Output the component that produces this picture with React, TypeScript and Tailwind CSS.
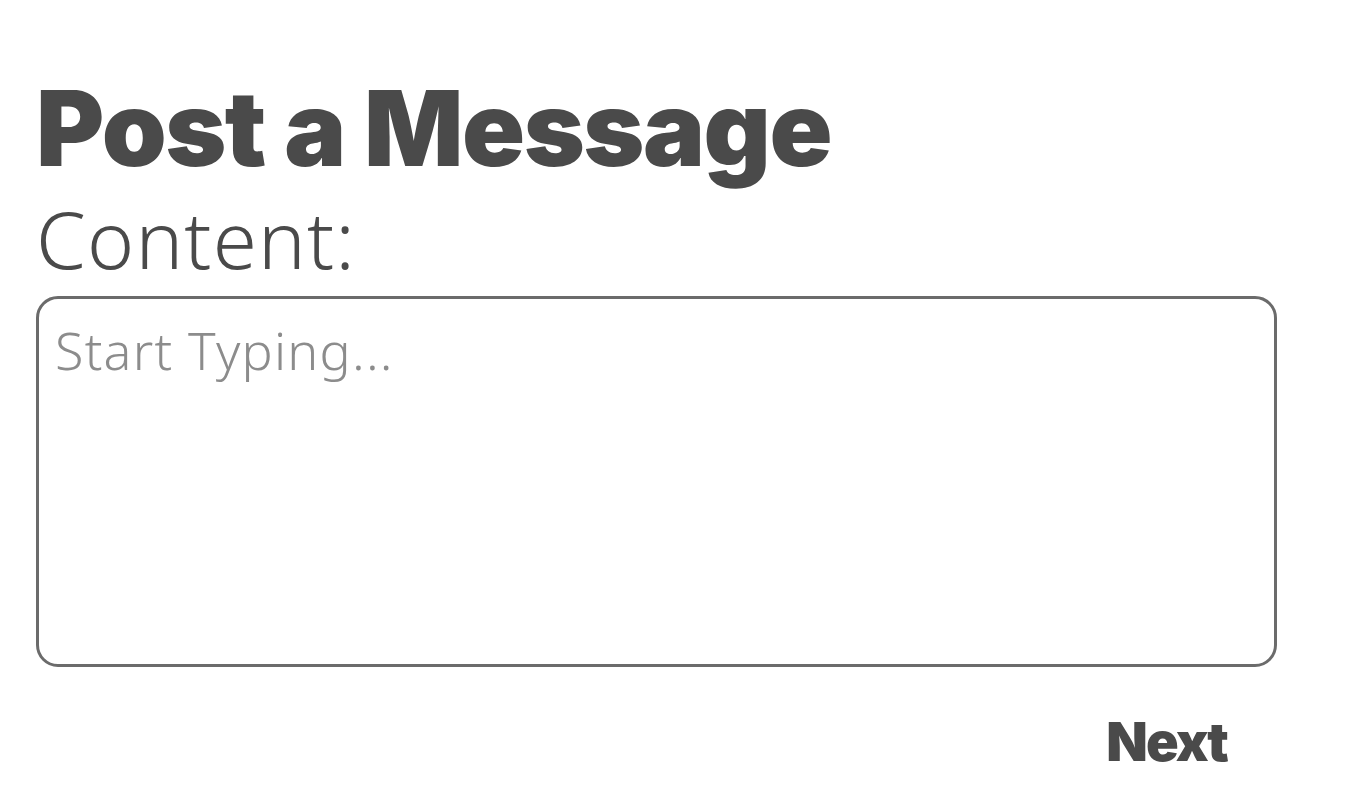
import React, { useState } from 'react';

export default function App() {
  const [content, setContent] = useState('');

  return (
    <div className="min-h-screen bg-white px-[36px] pt-[76px] text-[#4a4a4a]">
      {/* Heading */}
      <h1 className="font-['Inter','Liberation_Sans',sans-serif] text-[104px] leading-none font-black tracking-[-0.014em]">
        Post a Message
      </h1>

      <form className="flex flex-col" onSubmit={(e) => e.preventDefault()}>
        <label
          htmlFor="content"
          className="mt-[18px] font-['Noto_Sans','Liberation_Sans',sans-serif] text-[80px] leading-none font-light tracking-[0.015em]"
        >
          Content:
        </label>
        <textarea
          id="content"
          value={content}
          onChange={(e) => setContent(e.target.value)}
          placeholder="Start Typing..."
          className="mt-[18px] h-[371px] w-[1241px] resize-none rounded-[22px] border-[3px] border-[#6b6b6b] px-[16px] pt-[18px] pb-[14px] font-['Noto_Sans','Liberation_Sans',sans-serif] text-[52px] leading-tight font-light tracking-[0.024em] text-[#4a4a4a] outline-none placeholder:text-[#8c8c8c]"
        />
        <div className="flex w-[1241px] justify-end pr-[50px]">
          <button
            type="submit"
            className="mt-[48px] font-['Inter','Liberation_Sans',sans-serif] text-[54px] leading-none font-black tracking-[-0.035em] text-[#4a4a4a]"
          >
            Next
          </button>
        </div>
      </form>
    </div>
  );
}
